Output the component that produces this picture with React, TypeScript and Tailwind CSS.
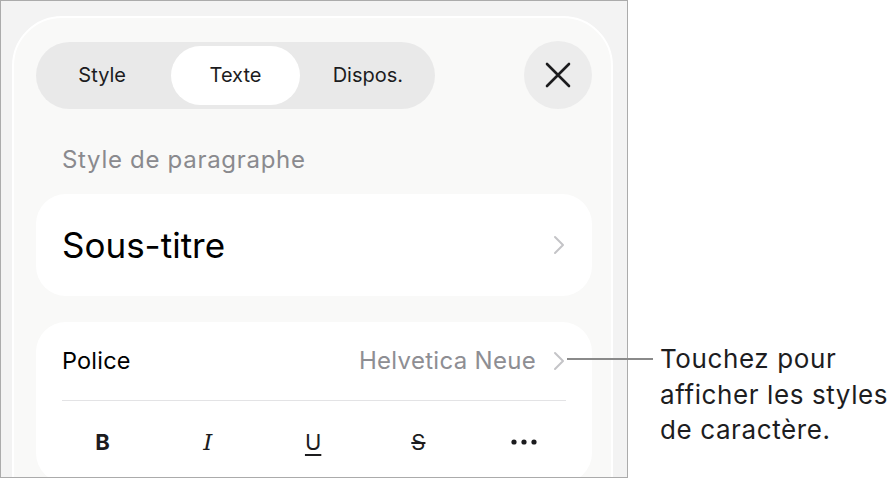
import { JSX } from 'react'

const sans = { fontFamily: 'Inter, "Liberation Sans", sans-serif' }

const Chevron = (): JSX.Element => (
  <svg width="12" height="20" viewBox="0 0 12 20" fill="none">
    <path d="M2 2l8 8-8 8" stroke="#c4c4c7" strokeWidth="2" strokeLinecap="round" strokeLinejoin="round" />
  </svg>
)

const Tabs = (): JSX.Element => (
  <div className="grid h-[67px] w-[399px] grid-cols-3 rounded-full bg-[#e9e9e9] p-[4px] text-[20px] text-[#1c1c1e]">
    <div className="flex items-center justify-center pr-[6px]">Style</div>
    <div className="mx-[1px] flex items-center justify-center rounded-full bg-white">Texte</div>
    <div className="flex items-center justify-center pl-[4px]">Dispos.</div>
  </div>
)

const CloseButton = (): JSX.Element => (
  <div className="flex h-[68px] w-[68px] items-center justify-center rounded-full bg-[#ececec]">
    <svg width="28" height="28" viewBox="0 0 28 28" fill="none">
      <path d="M3 3l22 22M25 3L3 25" stroke="#1c1c1e" strokeWidth="2.6" strokeLinecap="round" />
    </svg>
  </div>
)

const FormatRow = (): JSX.Element => (
  <div className="grid h-[82px] grid-cols-[repeat(5,105.25px)] items-center pl-[14px] text-[#1c1c1e]">
    <div className="flex justify-center text-[22px] font-bold">B</div>
    <div className="flex justify-center text-[23px] italic" style={{ fontFamily: '"DejaVu Serif", serif' }}>
      I
    </div>
    <div className="flex justify-center text-[22px] underline decoration-[1.5px] underline-offset-[4px]">U</div>
    <div className="flex justify-center text-[22px] line-through decoration-[1.5px]">S</div>
    <div className="flex justify-center">
      <svg width="26" height="6" viewBox="0 0 26 6">
        <circle cx="3" cy="3" r="2.6" fill="#1c1c1e" />
        <circle cx="13" cy="3" r="2.6" fill="#1c1c1e" />
        <circle cx="23" cy="3" r="2.6" fill="#1c1c1e" />
      </svg>
    </div>
  </div>
)

export default function App(): JSX.Element {
  return (
    <div className="relative flex h-[479px] w-[896px] bg-white" style={sans}>
      {/* screenshot frame */}
      <div className="h-[478px] w-[628px] shrink-0 overflow-hidden border border-[#ababab] bg-[#f3f3f3] pl-[11px] pt-[15px]">
        <div className="h-[520px] w-[601px] rounded-[50px] border-2 border-white bg-[#f9f9f8] pl-[22px] pr-[19px] pt-[23px]">
          <div className="flex items-center justify-between">
            <Tabs />
            <CloseButton />
          </div>

          <div className="flex h-[85px] items-center pl-[26px] pt-[17px] text-[24px] tracking-[0.7px] text-[#8a8a8e]">
            Style de paragraphe
          </div>

          <div className="flex h-[102px] items-center justify-between rounded-[30px] bg-white pl-[26px] pr-[27px]">
            <span className="text-[35px] text-black">Sous-titre</span>
            <Chevron />
          </div>

          <div className="mt-[26px] rounded-[30px] bg-white">
            <div className="mx-[26px] flex h-[79px] items-center justify-between border-b border-[#e3e3e5]">
              <span className="text-[23.5px] tracking-[0.2px] text-black">Police</span>
              <div className="flex items-center gap-[17px]">
                <span className="text-[24px] tracking-[0.3px] text-[#8e8e93]">Helvetica Neue</span>
                <div className="mr-[1px]">
                  <Chevron />
                </div>
              </div>
            </div>
            <FormatRow />
          </div>
        </div>
      </div>

      {/* callout */}
      <div className="absolute left-[567px] top-[358px] h-[2px] w-[86px] bg-[#8a8a8a]" />
      <div className="ml-[32px] pt-[341px] text-[26px] leading-[35.5px] tracking-[0.6px] text-[#1d1d1f]">
        <div>Touchez pour</div>
        <div>afficher les styles</div>
        <div>de caractère.</div>
      </div>
    </div>
  )
}
